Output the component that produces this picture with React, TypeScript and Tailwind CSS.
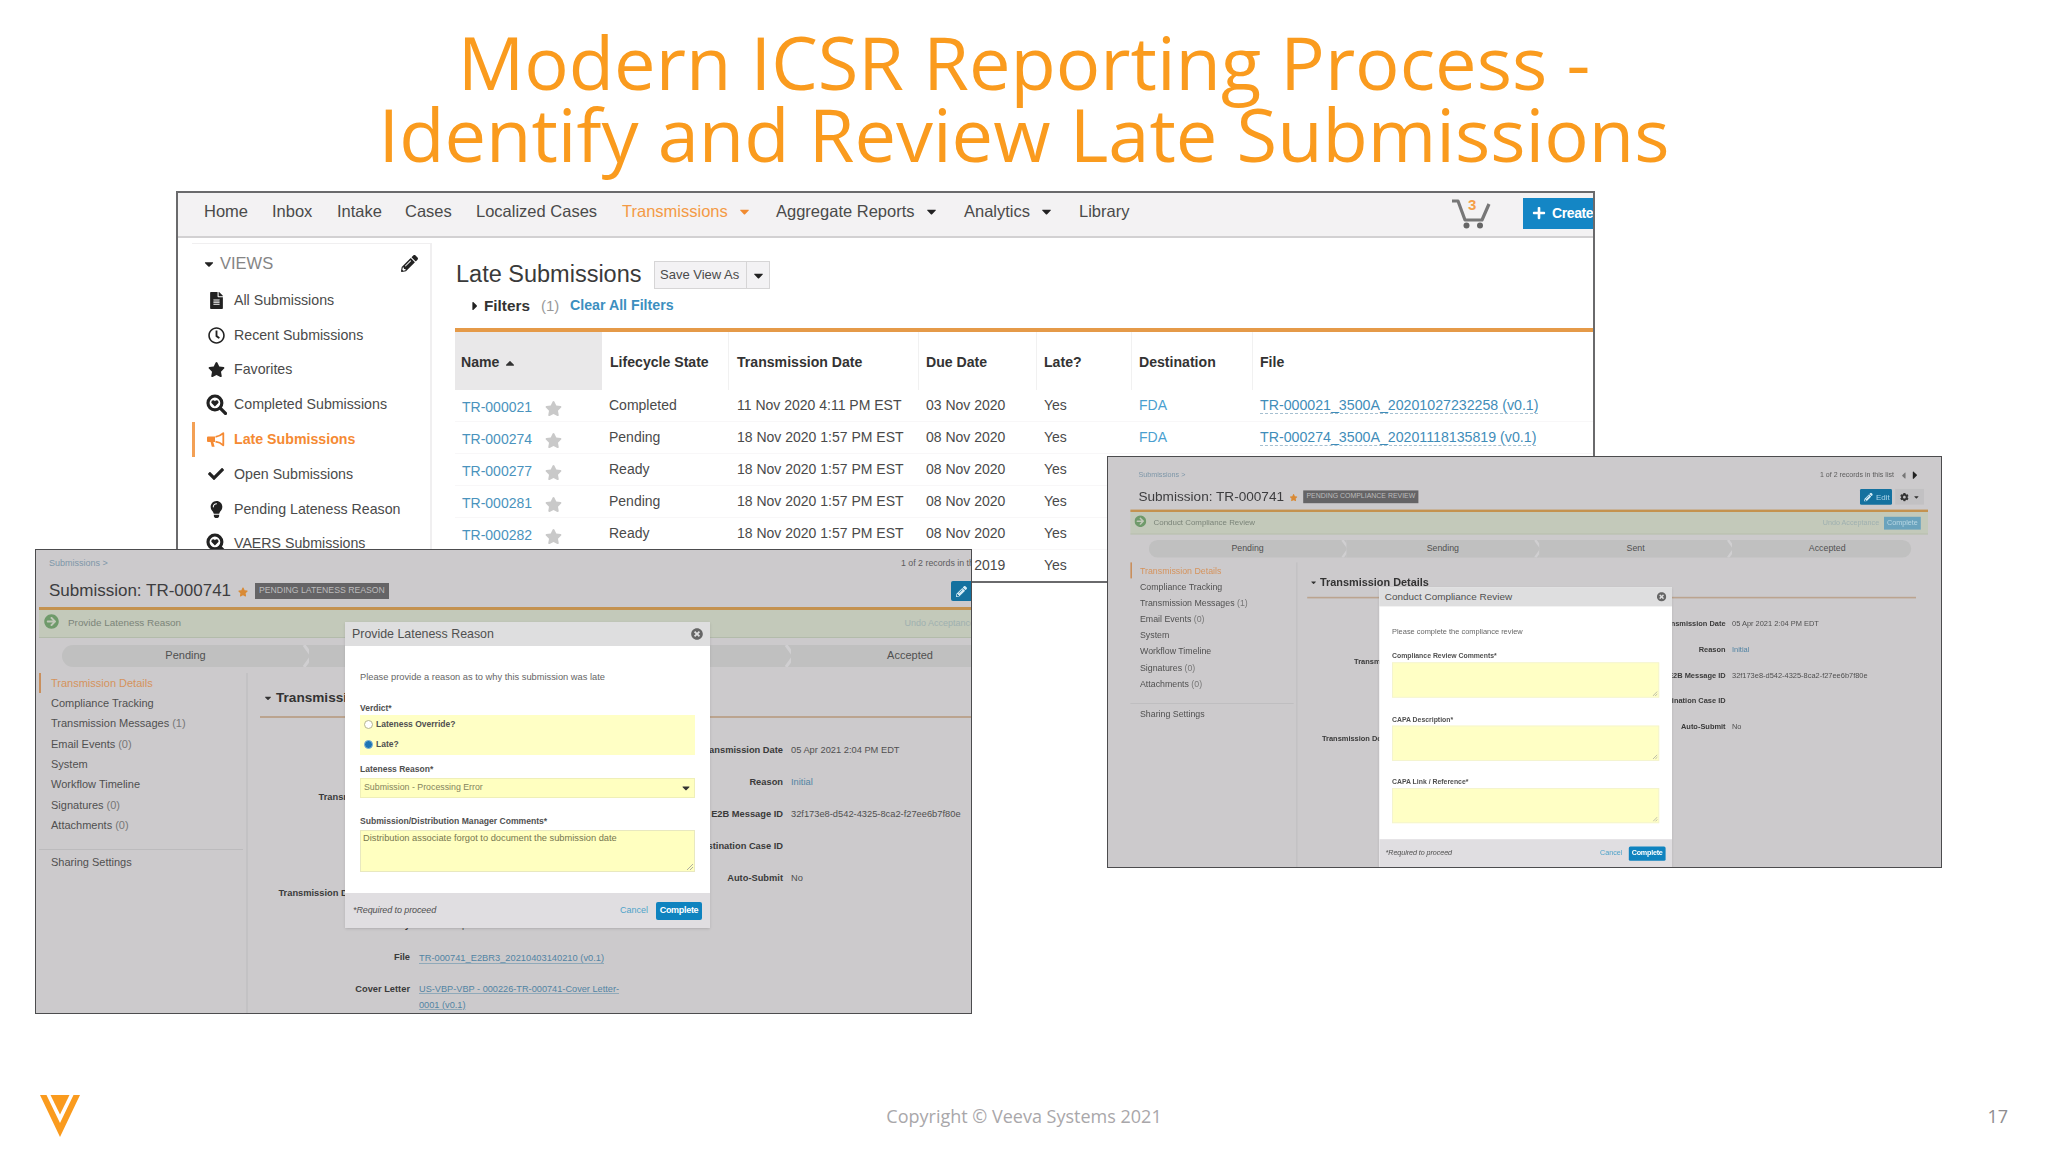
import type { ReactNode } from "react";
import {
  FaArrowCircleRight,
  FaCaretDown,
  FaCaretLeft,
  FaCaretRight,
  FaCaretUp,
  FaCheck,
  FaCog,
  FaFileAlt,
  FaLightbulb,
  FaPencilAlt,
  FaPlus,
  FaRegClock,
  FaStar,
  FaTimesCircle,
} from "react-icons/fa";

const VeevaMark = () => (
  <svg viewBox="0 0 40 42" className="w-[40px] h-[42px]">
    <path d="M0 0H6.5L20 28L33.500 0H40L20 42Z" fill="#fa9b1e" />
    <path d="M10.500 0H29.500L20 19.500Z" fill="#fa9b1e" />
  </svg>
);

const SearchHeart = () => (
  <svg viewBox="0 0 20 20" className="w-[21px] h-[21px] shrink-0">
    <circle cx="8.500" cy="8.500" r="6.600" fill="none" stroke="#222" strokeWidth="3" />
    <path d="M13.500 13.500L18.500 18.500" stroke="#222" strokeWidth="3.200" strokeLinecap="round" />
    <path d="M8.500 12L5 8.300Q5 6 6.900 6Q8 6 8.500 7Q9 6 10.100 6Q12 6 12 8.300Z" fill="#222" />
  </svg>
);

const Horn = () => (
  <svg viewBox="0 0 18 16" className="w-[18px] h-[16px] shrink-0">
    <path d="M1 4.500H8V10H6.300L7.600 14.800H4.800L3.600 10H1Q0 10 0 9V5.500Q0 4.500 1 4.500Z" fill="#f58a33" />
    <path d="M8.500 4.800Q13 4.300 16.300 1.200V13.300Q13 10.200 8.500 9.700" fill="none" stroke="#f58a33" strokeWidth="1.800" strokeLinejoin="round" />
  </svg>
);

const Cart = () => (
  <svg viewBox="0 0 40 30" className="w-[40px] h-[30px]">
    <path d="M1 2H7L14 21H31L38 5" fill="none" stroke="#777" strokeWidth="3.200" strokeLinejoin="round" />
    <circle cx="15.500" cy="26.500" r="3" fill="#666" />
    <circle cx="29" cy="26.500" r="3" fill="#666" />
  </svg>
);

const navItems = [
  { label: "Home", width: "w-[68px]" },
  { label: "Inbox", width: "w-[65px]" },
  { label: "Intake", width: "w-[68px]" },
  { label: "Cases", width: "w-[71px]" },
  { label: "Localized Cases", width: "w-[146px]" },
  { label: "Transmissions", width: "w-[154px]", caret: true, active: true },
  { label: "Aggregate Reports", width: "w-[188px]", caret: true },
  { label: "Analytics", width: "w-[115px]", caret: true },
  { label: "Library", width: "w-[60px]" },
];

const views = [
  { label: "All Submissions", icon: <FaFileAlt className="text-[17px]" /> },
  { label: "Recent Submissions", icon: <FaRegClock className="text-[17px]" /> },
  { label: "Favorites", icon: <FaStar className="text-[17px]" /> },
  { label: "Completed Submissions", icon: <SearchHeart /> },
  { label: "Late Submissions", icon: <Horn />, active: true },
  { label: "Open Submissions", icon: <FaCheck className="text-[16px]" /> },
  { label: "Pending Lateness Reason", icon: <FaLightbulb className="text-[17px]" /> },
  { label: "VAERS Submissions", icon: <SearchHeart /> },
];

const rows = [
  ["TR-000021", "Completed", "11 Nov 2020 4:11 PM EST", "03 Nov 2020", "TR-000021_3500A_20201027232258 (v0.1)"],
  ["TR-000274", "Pending", "18 Nov 2020 1:57 PM EST", "08 Nov 2020", "TR-000274_3500A_20201118135819 (v0.1)"],
  ["TR-000277", "Ready", "18 Nov 2020 1:57 PM EST", "08 Nov 2020", ""],
  ["TR-000281", "Pending", "18 Nov 2020 1:57 PM EST", "08 Nov 2020", ""],
  ["TR-000282", "Ready", "18 Nov 2020 1:57 PM EST", "08 Nov 2020", ""],
  ["", "", "", "08 Nov 2019", ""],
];

const tableCols = "grid grid-cols-[147px_127px_190px_118px_95px_121px_1fr]";

const LateSubmissions = () => {
  return (
    <div className="absolute left-[176px] top-[191px] w-[1419px] h-[392px] border-2 border-[#6a6a6c] bg-white overflow-hidden text-[#4a4a4a]">
      <div className="h-[45px] bg-[#f3f2f3] border-b-2 border-[#d2d1d2] flex items-center pl-[26px] pb-[6px] relative">
        {navItems.map((item) => (
          <div
            key={item.label}
            className={`${item.width} shrink-0 flex items-center gap-[9px] text-[16.5px] whitespace-nowrap ${item.active ? "text-[#f39a45]" : ""}`}
          >
            {item.label}
            {item.caret && <FaCaretDown className={item.active ? "text-[15px] text-[#f08b30]" : "text-[15px] text-[#222]"} />}
          </div>
        ))}
        <div className="ml-auto mr-[32px] mt-[4px] relative">
          <Cart />
          <span className="absolute left-[17px] top-[-3px] text-[15px] leading-[17px] font-bold text-[#f5a04a]">3</span>
        </div>
        <div className="w-[70px] h-[31px] mt-[3px] bg-[#1486c5] text-white text-[14px] font-bold flex items-center gap-[6px] pl-[9px] shrink-0 tracking-[-0.4px]">
          <FaPlus className="text-[14px] shrink-0" />
          Create
        </div>
      </div>
      <div className="flex">
        <div className="ml-[14px] mt-[5px] w-[240px] h-[345px] shrink-0 border-r-2 border-t border-[#f0eff0]">
          <div className="flex items-center h-[39px] pl-[10px] pr-[12px] text-[16.5px] text-[#858585]">
            <FaCaretDown className="text-[14px] text-[#222] mr-[4px]" />
            VIEWS
            <FaPencilAlt className="ml-auto text-[17px] text-[#222]" />
          </div>
          {views.map((v) => (
            <div
              key={v.label}
              className={`h-[34.8px] flex items-center text-[14.2px] whitespace-nowrap border-l-3 ${v.active ? "border-[#f3a055] text-[#f58a33] font-bold" : "border-transparent"}`}
            >
              <span className={`w-[39px] pl-[11px] flex ${v.active ? "" : "text-[#222]"}`}>
                <span className="w-[20px] flex justify-center">{v.icon}</span>
              </span>
              {v.label}
            </div>
          ))}
        </div>
        <div className="flex-1 ml-[23px] pt-[22px]">
          <div className="flex items-center h-[30px]">
            <h2 className="w-[199px] pl-px text-[23.5px] text-[#3a3a3a] whitespace-nowrap">Late Submissions</h2>
            <div className="flex h-[28px] border border-[#d6d5d6] bg-[#f3f2f4] text-[13px] whitespace-nowrap">
              <span className="w-[91px] flex items-center pl-[5px]">Save View As</span>
              <span className="w-[23px] flex items-center justify-center border-l border-[#d6d5d6]">
                <FaCaretDown className="text-[15px] text-[#222]" />
              </span>
            </div>
          </div>
          <div className="flex items-center h-[32px] pl-[13px] whitespace-nowrap">
            <FaCaretRight className="text-[14px] text-[#222] mr-[2px]" />
            <span className="text-[15.3px] font-bold text-[#333] w-[57px]">Filters</span>
            <span className="text-[15px] text-[#999] w-[29px]">(1)</span>
            <span className="text-[14.2px] font-bold text-[#3c8fc0]">Clear All Filters</span>
          </div>
          <div className="h-[4px] mt-[6px] bg-[#e59a48]" />
          <div className={`${tableCols} h-[58px] text-[14.1px] font-bold text-[#333] whitespace-nowrap`}>
            <div className="bg-[#e9e8e9] flex items-center pt-[3px] pl-[6px] gap-[4px]">
              Name <FaCaretUp className="text-[14px]" />
            </div>
            <div className="flex items-center pt-[3px] pl-[8px] border-r border-[#f1f1f1]">Lifecycle State</div>
            <div className="flex items-center pt-[3px] pl-[8px] border-r border-[#f1f1f1]">Transmission Date</div>
            <div className="flex items-center pt-[3px] pl-[7px] border-r border-[#f1f1f1]">Due Date</div>
            <div className="flex items-center pt-[3px] pl-[7px] border-r border-[#f1f1f1]">Late?</div>
            <div className="flex items-center pt-[3px] pl-[7px] border-r border-[#f1f1f1]">Destination</div>
            <div className="flex items-center pt-[3px] pl-[7px]">File</div>
          </div>
          {rows.map((r, i) => (
            <div key={i} className={`${tableCols} h-[32px] items-center text-[14px] whitespace-nowrap border-b border-[#f8f7f8]`}>
              <div className="flex items-center pl-[7px] pt-[3px] text-[#4a93bd]">
                <span className="w-[83px]">{r[0]}</span>
                {r[0] && <FaStar className="text-[17px] mt-[2px] text-[#c9c9c9]" />}
              </div>
              <div className="pl-[7px]">{r[1]}</div>
              <div className="pl-[8px]">{r[2]}</div>
              <div className="pl-[7px]">{r[3]}</div>
              <div className="pl-[7px]">Yes</div>
              <div className="pl-[7px] text-[#4a9fd0]">{r[4] && "FDA"}</div>
              <div className="pl-[7px] text-[14.2px] text-[#3f8db9]">
                {r[4] && <span className="border-b border-dashed border-[#a5bfd0]">{r[4]}</span>}
              </div>
            </div>
          ))}
        </div>
      </div>
    </div>
  );
};

const stages = [
  { label: "Pending", cls: "w-[247px] rounded-l-full" },
  { label: "Sending", cls: "w-[241px]" },
  { label: "Sent", cls: "w-[241px]" },
  { label: "Accepted", cls: "w-[224px] pl-[14px] rounded-r-full" },
];

const sections = [
  ["Transmission Details"],
  ["Compliance Tracking"],
  ["Transmission Messages", "(1)"],
  ["Email Events", "(0)"],
  ["System"],
  ["Workflow Timeline"],
  ["Signatures", "(0)"],
  ["Attachments", "(0)"],
];

const leftFields = [
  ["Transmission Profile", ""],
  ["", ""],
  ["", ""],
  ["Transmission Document Type", ""],
  ["Sender Party", "Verteo Biopharma"],
];

const rightFields = [
  ["Transmission Date", "05 Apr 2021 2:04 PM EDT"],
  ["Reason", "Initial"],
  ["E2B Message ID", "32f173e8-d542-4325-8ca2-f27ee6b7f80e"],
  ["Destination Case ID", ""],
  ["Auto-Submit", "No"],
];

type RecordProps = { status: string; task: string; children: ReactNode };

// One submission record page, dimmed behind whatever dialog is passed in
const SubmissionRecord = ({ status, task, children }: RecordProps) => {
  return (
    <div className="relative w-[1018px] h-[512px] shrink-0 text-[#505050] whitespace-nowrap">
      <div className="h-[28px] flex items-center justify-between pl-[13px] pr-[26px] text-[9px]">
        <span className="text-[#7d96a8]">Submissions &gt;</span>
        <span className="flex items-center text-[8.800px] text-[#5c5c5c]">
          <span className="w-[92px]">1 of 2 records in this list</span>
          <FaCaretLeft className="ml-[6px] text-[13px] text-[#777]" />
          <FaCaretRight className="text-[16px] text-[#222]" />
        </span>
      </div>
      <div className="h-[29px] pb-[3px] flex items-center pl-[13px] pr-[23px]">
        <span className="text-[17px] w-[189px] text-[#3d3d3f]">Submission: TR-000741</span>
        <FaStar className="text-[10px] mt-[2px] text-[#d98a35]" />
        <span className="ml-[7px] h-[16px] px-[4px] bg-[#656466] text-[#bdbcbd] text-[8.700px] flex items-center">{status}</span>
        <span className="ml-auto w-[40px] h-[20px] bg-[#14719f] text-[#a9d4ea] text-[10px] flex items-center gap-[4px] pl-[5px] rounded-xs">
          <FaPencilAlt className="text-[11px] text-[#d6ecf6]" />
          Edit
        </span>
        <span className="ml-[4px] w-[36px] h-[20px] bg-[#c2c1c3] flex items-center justify-center gap-[5px] text-[#333]">
          <FaCog className="text-[11px]" />
          <FaCaretDown className="text-[9px]" />
        </span>
      </div>
      <div className="ml-[3px] w-[997px] h-[3px] bg-[#c4924f]" />
      <div className="ml-[3px] w-[997px] h-[28px] bg-[#c3c9ba] border-b border-[#b3bbab] flex items-center pl-[5px] pr-[9px] text-[9.900px] text-[#7b8479]">
        <FaArrowCircleRight className="text-[15px] text-[#6f9a6a] mr-[9px] mb-[4px]" />
        {task}
        <span className="ml-auto mr-[6px] text-[9px] text-[#9fb0b0]">Undo Acceptance</span>
        <span className="w-[46px] h-[16px] bg-[#6aa3bd] text-[#b9d8e4] text-[9px] flex items-center justify-center">Complete</span>
      </div>
      <div className="mt-[7px] mb-[6px] ml-[26px] flex h-[22px]">
        {stages.map((s, i) => (
          <div key={s.label} className={`${s.cls} relative bg-[#c0c0c0] flex items-center justify-center text-[11px] pb-[2px]`}>
            {s.label}
            {i < 3 && (
              <svg viewBox="0 0 12 22" className="absolute right-[-5px] top-0 w-[12px] h-[22px]">
                <path d="M2 0L10 11L2 22" fill="none" stroke="#d0cfd1" strokeWidth="3" />
              </svg>
            )}
          </div>
        ))}
      </div>
      <div className="flex">
        <div className="w-[212px] h-[389px] shrink-0 pl-[3px] border-r-2 border-[#c3c2c4] text-[11px]">
          {sections.map(([label, count], i) => (
            <div
              key={label}
              className={`h-[20.300px] flex items-center gap-[3px] pl-[10px] border-l-2 ${i === 0 ? "border-[#c98f5c] text-[#d5935c]" : "border-transparent"}`}
            >
              {label}
              {count && <span className="text-[#777]">{count}</span>}
            </div>
          ))}
          <div className="mt-[14px] mr-[3px] pl-[12px] h-[24px] flex items-center border-t border-[#bcbbbd]">Sharing Settings</div>
        </div>
        <div className="pt-[15px]">
          <div className="h-[20px] flex items-center pl-[15px] gap-[3px] text-[13.600px] font-bold text-[#333]">
            <FaCaretDown className="text-[10px]" />
            Transmission Details
          </div>
          <div className="ml-[12px] mt-[8px] w-[761px] h-[2px] bg-[#bba48f]" />
          <div className="flex text-[9.300px]">
            <div className="w-[388px] pt-[64px]">
              {leftFields.map(([label, value], i) => (
                <div key={i} className="h-[32px] flex items-center">
                  <span className="w-[162px] mr-[9px] text-right font-bold text-[#3a3a3a]">{label}</span>
                  {value}
                </div>
              ))}
              <div className="h-[32px] flex items-center">
                <span className="w-[162px] mr-[9px] text-right font-bold text-[#3a3a3a]">File</span>
                <span className="text-[#5284a3] border-b border-[#8fa9b9] leading-[10px]">TR-000741_E2BR3_20210403140210 (v0.1)</span>
              </div>
              <div className="h-[32px] flex items-start leading-[15.500px] pt-[8px]">
                <span className="w-[162px] mr-[9px] text-right font-bold text-[#3a3a3a]">Cover Letter</span>
                <span className="text-[#5284a3] underline decoration-[#8fa9b9] text-[9.200px]">
                  US-VBP-VBP - 000226-TR-000741-Cover Letter-
                  <br />
                  0001 (v0.1)
                </span>
              </div>
            </div>
            <div className="pt-[17px]">
              {rightFields.map(([label, value]) => (
                <div key={label} className="h-[32.100px] flex items-center">
                  <span className="w-[147px] mr-[8px] text-right font-bold text-[#3a3a3a]">{label}</span>
                  <span className={value === "Initial" ? "text-[#5284a3]" : ""}>{value}</span>
                </div>
              ))}
            </div>
          </div>
        </div>
      </div>
      {children}
    </div>
  );
};

const DialogHeader = ({ title }: { title: string }) => (
  <div className="h-[24px] shrink-0 bg-[#dededf] flex items-center justify-between pl-[7px] pr-[7px] text-[12.400px]">
    {title}
    <FaTimesCircle className="text-[12px] text-[#666]" />
  </div>
);

const DialogFooter = () => (
  <div className="h-[35px] shrink-0 bg-[#e0dee1] flex items-center pl-[8px] pr-[8px] text-[9px]">
    <span className="italic tracking-[-0.1px]">*Required to proceed</span>
    <span className="ml-auto mr-[8px] text-[#4fa3c9]">Cancel</span>
    <span className="w-[46px] h-[18px] bg-[#0f83bf] text-white font-bold text-[9px] tracking-[-0.3px] flex items-center justify-center rounded-xs">Complete</span>
  </div>
);

const Grip = () => (
  <svg viewBox="0 0 6 6" className="absolute right-[1px] bottom-[1px] w-[6px] h-[6px]">
    <path d="M0 6L6 0M3 6L6 3" stroke="#999" strokeWidth="0.800" />
  </svg>
);

const LatenessDialog = () => (
  <div className="absolute left-[309px] top-[72px] w-[365px] h-[306px] bg-white flex flex-col shadow-sm">
    <DialogHeader title="Provide Lateness Reason" />
    <div className="flex-1 px-[15px] text-[8.800px]">
      <p className="mt-[24px] h-[14px] leading-[14px] text-[9.300px] text-[#666]">Please provide a reason as to why this submission was late</p>
      <p className="mt-[17px] h-[14px] leading-[14px] text-[8.500px] font-bold">Verdict*</p>
      <div className="h-[40px] bg-[#ffffc5] pl-[4px] text-[8.500px] font-bold">
        <div className="h-[19px] flex items-center gap-[3px]">
          <span className="w-[9px] h-[9px] rounded-full border border-[#b5b58e] bg-white" />
          Lateness Override?
        </div>
        <div className="h-[20px] flex items-center gap-[3px]">
          <span className="w-[9px] h-[9px] rounded-full border border-[#7fb2d5] bg-[#1d74b4]" />
          Late?
        </div>
      </div>
      <p className="mt-[7px] h-[16px] leading-[14px] text-[8.500px] font-bold">Lateness Reason*</p>
      <div className="h-[20px] bg-[#ffffc0] border border-[#efefb8] flex items-center justify-between pl-[3px] pr-[2px] text-[#84845c]">
        Submission - Processing Error
        <FaCaretDown className="text-[12px] text-[#333]" />
      </div>
      <p className="mt-[15px] h-[17px] leading-[16px] text-[8.600px] font-bold">Submission/Distribution Manager Comments*</p>
      <div className="relative h-[42px] bg-[#ffffc0] border border-[#e8e8c0] pl-[2px] pt-[1px] leading-[13px] text-[9.300px] text-[#77774f]">
        Distribution associate forgot to document the submission date
        <Grip />
      </div>
    </div>
    <DialogFooter />
  </div>
);

const ComplianceDialog = () => (
  <div className="absolute left-[314px] top-[154px] w-[366px] h-[350px] bg-white flex flex-col shadow-sm">
    <DialogHeader title="Conduct Compliance Review" />
    <div className="flex-1 px-[16px] text-[8.600px]">
      <p className="mt-[25px] h-[14px] leading-[14px] text-[9.300px] text-[#666]">Please complete the compliance review</p>
      {["Compliance Review Comments*", "CAPA Description*", "CAPA Link / Reference*"].map((label) => (
        <div key={label} className="pt-[15px] h-[78.700px] flex flex-col">
          <p className="h-[16px] leading-[16px] font-bold">{label}</p>
          <div className="relative h-[44px] bg-[#ffffc5] border border-[#f2f2d0]">
            <Grip />
          </div>
        </div>
      ))}
    </div>
    <DialogFooter />
  </div>
);

const App = () => {
  return (
    <div className="relative w-[2048px] h-[1152px] bg-white overflow-hidden flex flex-col justify-between font-['Liberation_Sans',Arial,sans-serif]">
      <h1 className="pt-[26px] text-center font-['Open_Sans',sans-serif] text-[74px] leading-[72px] text-[#fa9b1e] whitespace-nowrap">
        Modern ICSR Reporting Process -
        <br />
        Identify and Review Late Submissions
      </h1>

      <LateSubmissions />

      <div className="absolute left-[35px] top-[549px] w-[937px] h-[465px] border border-[#4c4c4e] bg-[#cccacc] overflow-hidden">
        <SubmissionRecord status="PENDING LATENESS REASON" task="Provide Lateness Reason">
          <LatenessDialog />
        </SubmissionRecord>
      </div>

      <div className="absolute left-[1107px] top-[456px] w-[835px] h-[412px] border border-[#4c4c4e] bg-[#cccacc] overflow-hidden pl-[20px] pt-[7px]">
        <div className="origin-top-left scale-80">
          <SubmissionRecord status="PENDING COMPLIANCE REVIEW" task="Conduct Compliance Review">
            <ComplianceDialog />
          </SubmissionRecord>
        </div>
      </div>

      <footer className="grid grid-cols-3 items-center h-[72px] px-[40px] font-['Open_Sans',sans-serif] text-[18px] text-[#a9a7aa]">
        <VeevaMark />
        <span className="text-center">Copyright © Veeva Systems 2021</span>
        <span className="text-right text-[#8f8d90]">17</span>
      </footer>
    </div>
  );
};

export default App;
